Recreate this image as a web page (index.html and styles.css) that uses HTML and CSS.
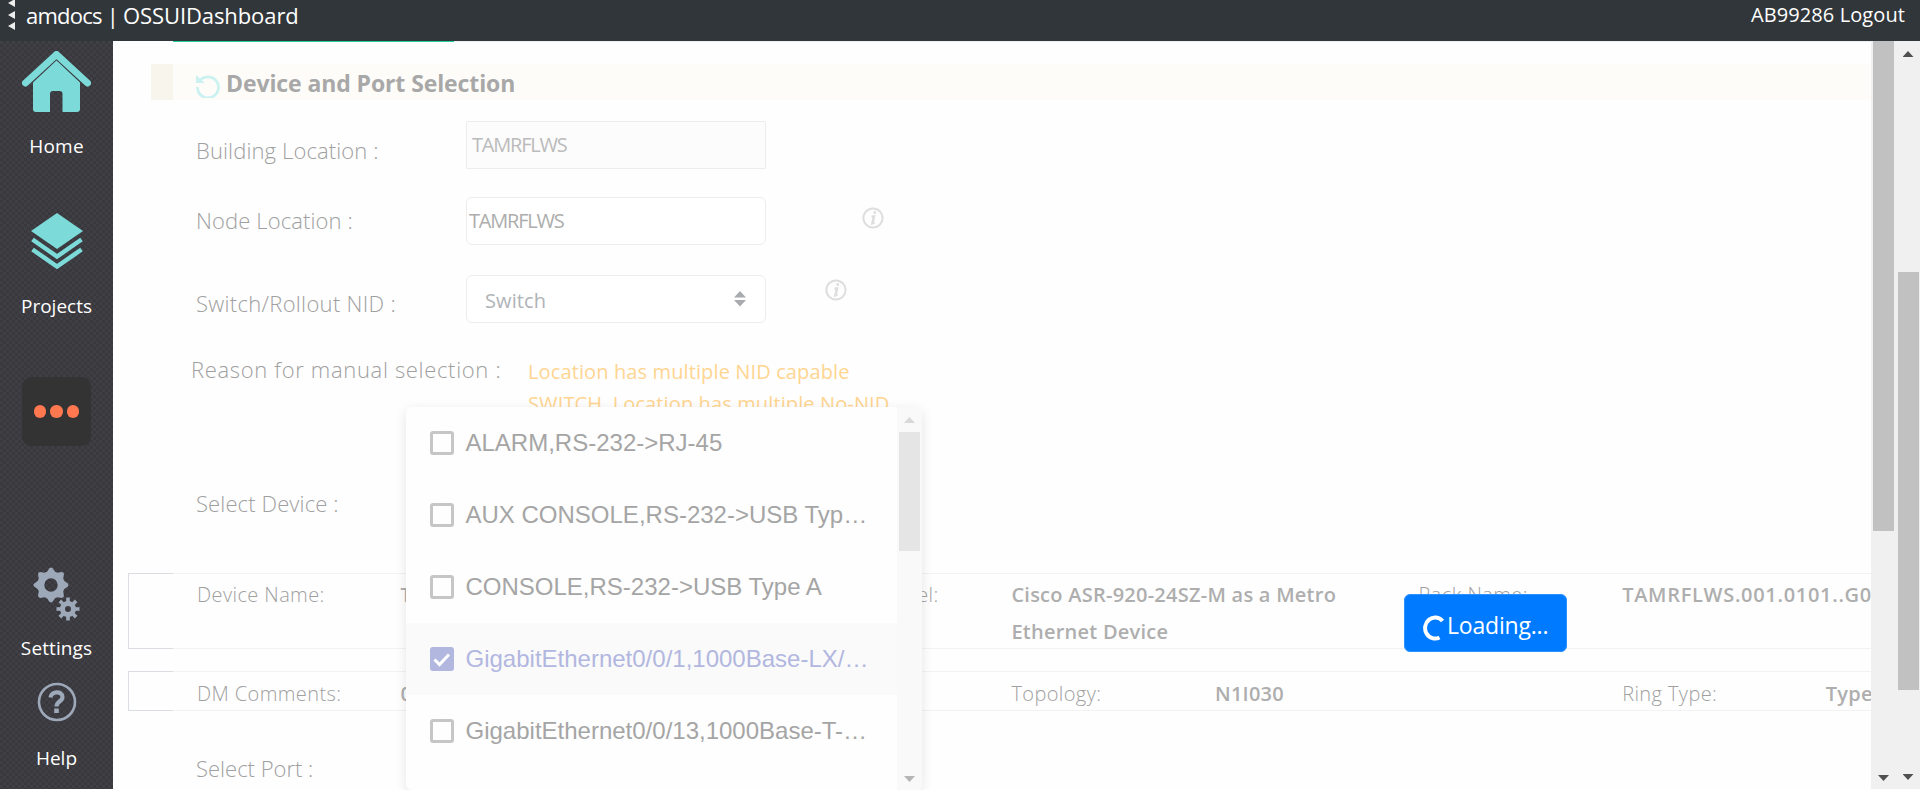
FILE: index.html
```html
<!DOCTYPE html>
<html lang="en">
<head>
<meta charset="utf-8">
<title>OSSUIDashboard</title>
<link rel="stylesheet" href="styles.css">
</head>
<body>
<header class="topbar">
  <div class="grip"><i></i><i></i><i></i></div>
  <div class="brand"><span class="org">amdocs | </span><span>OSSUIDashboard</span></div>
  <div class="user">AB99286 Logout</div>
</header>
<div class="shell">
  <nav class="sidebar">
    <svg class="ic-home" viewBox="0 0 69 61" width="69" height="61">
      <path d="M3.500 32 34.500 3.500 65.500 32" fill="none" stroke="#7cdbd9" stroke-width="7" stroke-linecap="round" stroke-linejoin="round"/>
      <path d="M34.500 9.500 58 31.500V58a3 3 0 0 1-3 3H40.500V43a3 3 0 0 0-3-3H31a3 3 0 0 0-3 3V61H14a3 3 0 0 1-3-3V31.500Z" fill="#7cdbd9"/>
    </svg>
    <span class="nav-label l-home">Home</span>
    <svg class="ic-layers" viewBox="0 0 52 56" width="52" height="56">
      <path d="M26 0 52 18 26 36 0 18Z" fill="#7cdbd9"/>
      <path d="M1.500 26.500 26 43.500 50.500 26.500M1.500 36.500 26 53.500 50.500 36.500" fill="none" stroke="#7cdbd9" stroke-width="4.500"/>
    </svg>
    <span class="nav-label l-projects">Projects</span>
    <div class="more"><i></i><i></i><i></i></div>
    <svg class="ic-gears" viewBox="0 0 48 54" width="48" height="54" fill="#9da8b9">
      <defs>
        <path id="tooth" d="M13 6 16.500 1.200Q18-.3 19.500 1.200L23 6Z"/>
        <rect id="cog" x="33.200" y="30.500" width="3.600" height="5"/>
      </defs>
      <circle cx="18" cy="18" r="10.200" fill="none" stroke="#9da8b9" stroke-width="7"/>
      <use href="#tooth"/><use href="#tooth" transform="rotate(45 18 18)"/><use href="#tooth" transform="rotate(90 18 18)"/><use href="#tooth" transform="rotate(135 18 18)"/><use href="#tooth" transform="rotate(180 18 18)"/><use href="#tooth" transform="rotate(225 18 18)"/><use href="#tooth" transform="rotate(270 18 18)"/><use href="#tooth" transform="rotate(315 18 18)"/>
      <circle cx="35" cy="42" r="5.500" fill="none" stroke="#9da8b9" stroke-width="5"/>
      <use href="#cog"/><use href="#cog" transform="rotate(45 35 42)"/><use href="#cog" transform="rotate(90 35 42)"/><use href="#cog" transform="rotate(135 35 42)"/><use href="#cog" transform="rotate(180 35 42)"/><use href="#cog" transform="rotate(225 35 42)"/><use href="#cog" transform="rotate(270 35 42)"/><use href="#cog" transform="rotate(315 35 42)"/>
    </svg>
    <span class="nav-label l-settings">Settings</span>
    <svg class="ic-help" viewBox="0 0 40 40" width="40" height="40">
      <circle cx="20" cy="20" r="18" fill="none" stroke="#9da8b9" stroke-width="2.600"/>
      <path d="M13.500 15.500C14 9 25.500 8.500 25.500 15 25.500 19.500 19.500 19.500 19.500 24.500" fill="none" stroke="#9da8b9" stroke-width="4.200"/>
      <rect x="17.200" y="26.500" width="4.600" height="4.500" fill="#9da8b9"/>
    </svg>
    <span class="nav-label l-help">Help</span>
  </nav>
  <main class="content">
    <div class="tabline"><i></i></div>
    <div class="band">
      <svg class="ic-reset" viewBox="0 0 24 24" width="24" height="24">
        <path d="M4 6.500A10.500 10.500 0 1 1 1.500 13" fill="none" stroke="#cbf2f1" stroke-width="2.800"/>
        <path d="M0 1V9H9Z" fill="#cbf2f1"/>
      </svg>
      <h2>Device and Port Selection</h2>
    </div>
    <div class="row r-building">
      <label class="lab">Building Location :</label>
      <div class="field disabled">TAMRFLWS</div>
    </div>
    <div class="row r-node">
      <label class="lab">Node Location :</label>
      <div class="field">TAMRFLWS</div>
      <svg class="info info-a" viewBox="0 0 22 22" width="22" height="22"><circle cx="11" cy="11" r="9.600"/><path d="M9.500 9.500h2.500l-1.500 6.500 2-.8" stroke-width="2.600"/><path d="M11.500 5.500h2.500" stroke-width="2.600"/></svg>
    </div>
    <div class="row r-switch">
      <label class="lab wide">Switch/Rollout NID :</label>
      <div class="field select"><span>Switch</span>
        <svg viewBox="0 0 12 16" width="12" height="16"><path d="M6 0 12 6.500H0ZM0 9H12L6 15.500Z" fill="#a9abae"/></svg>
      </div>
      <svg class="info info-b" viewBox="0 0 22 22" width="22" height="22"><circle cx="11" cy="11" r="9.600"/><path d="M9.500 9.500h2.500l-1.500 6.500 2-.8" stroke-width="2.600"/><path d="M11.500 5.500h2.500" stroke-width="2.600"/></svg>
    </div>
    <div class="row r-reason">
      <label class="lab reason">Reason for manual selection :</label>
      <div class="warn">Location has multiple NID capable<br>SWITCH, Location has multiple No-NID</div>
    </div>
    <div class="row r-device"><label class="lab">Select Device :</label></div>
    <div class="box box-a">
      <div class="cap"></div>
      <div class="cells">
        <span class="k">Device Name:</span><b class="two">T</b><span class="k">Device Model:</span>
        <b class="two">Cisco ASR-920-24SZ-M as a Metro<br>Ethernet Device</b><span class="k">Rack Name:</span><b class="two tam">TAMRFLWS.001.0101..G03</b>
      </div>
    </div>
    <div class="box box-b">
      <div class="cap"></div>
      <div class="cells">
        <span class="k">DM Comments:</span><b class="three">0</b>
        <span class="k">Topology:</span><b class="two">N1I030</b><span class="k">Ring Type:</span><b>Type</b>
      </div>
    </div>
    <div class="row r-port"><label class="lab">Select Port :</label></div>
  </main>
  <div class="bar inner"><div class="thumb"></div><i class="down"></i></div>
  <div class="bar outer"><i class="up"></i><div class="thumb"></div><i class="down"></i></div>
  <div class="drop-clip">
    <div class="drop">
      <ul>
        <li><i class="cb"></i><span>ALARM,RS-232-&gt;RJ-45</span></li>
        <li><i class="cb"></i><span>AUX CONSOLE,RS-232-&gt;USB Typ…</span></li>
        <li><i class="cb"></i><span>CONSOLE,RS-232-&gt;USB Type A</span></li>
        <li class="on"><i class="cb"><svg viewBox="0 0 24 24" width="24" height="24"><path d="M4.500 12.500 9.500 17.500 19 7.500" fill="none" stroke="#fff" stroke-width="3"/></svg></i><span>GigabitEthernet0/0/1,1000Base-LX/…</span></li>
        <li><i class="cb"></i><span>GigabitEthernet0/0/13,1000Base-T-…</span></li>
      </ul>
      <div class="dbar"><i class="up"></i><div class="thumb"></div><i class="down"></i></div>
    </div>
  </div>
  <div class="loading">
    <svg viewBox="0 0 24 26" width="24" height="26"><path d="M20.500 6A10 10.500 0 1 0 17.500 22.500" fill="none" stroke="#fff" stroke-width="4"/></svg>
    <span>Loading...</span>
  </div>
</div>
</body>
</html>
```
FILE: styles.css
```css
* { box-sizing: border-box; }
body { margin: 0; height: 798px; overflow: hidden; background: #fff; font-family: "Open Sans", "Noto Sans", sans-serif; }
h2, ul { margin: 0; padding: 0; }
.topbar { display: flex; height: 41px; background: #31363a; color: #fff; line-height: 31px; }
.grip { width: 15px; padding-left: 8px; display: flex; flex-direction: column; }
.grip i { flex: none; border: 4px solid transparent; border-width: 4px 7px 4px 0; border-right-color: #eee; margin-bottom: 3.500px; width: 7px; height: 8px; }
.grip i:first-child { margin-top: -1px; }
.brand { margin-left: 11px; font-size: 22px; letter-spacing: -0.1px; flex: 1; white-space: pre; }
.org { letter-spacing: -0.75px; }
.user { font-size: 20px; letter-spacing: 0.1px; padding-right: 15px; line-height: 30px; }
.shell { position: relative; display: flex; height: 748px; }

.sidebar { width: 113px; display: flex; flex-direction: column; align-items: center; color: #fff; 
  background: repeating-conic-gradient(#39383d 0 25%, #403f45 0 50%) 0 0 / 6px 6px; }
.nav-label { font-size: 19px; line-height: 26px; }
.ic-home { margin-top: 10px; }
.l-home { margin-top: 21px; letter-spacing: .2px; }
.ic-layers { margin-top: 54px; }
.l-projects { margin-top: 24px; }
.more { margin-top: 58px; width: 69px; height: 69px; border-radius: 9px; background: #333; display: flex; gap: 4px; align-items: center; justify-content: center; }
.more i { width: 12.5px; height: 12.5px; border-radius: 50%; background: #ff7850; }
.ic-gears { margin-top: 121px; }
.l-settings { margin-top: 14px; letter-spacing: .1px; }
.ic-help { margin-top: 21px; }
.l-help { margin-top: 23px; }

.content { flex: 1; min-width: 0; overflow: hidden; background: #fefefe; }
.tabline { height: 23px; padding-left: 60px; background: linear-gradient(#eee, #eee) 60px 0 / 100% 1px no-repeat; }
.tabline i { display: block; width: 281px; height: 1px; background: #20d096; }
.band { display: flex; height: 36px; margin-left: 38px; background: linear-gradient(90deg, #f8f5ed 22px, #fdfcf8 22px); }
.ic-reset { margin: 10px 6px 0 45px; }
h2 { font-size: 23px; line-height: 39px; color: #a8a8a8; font-weight: 700; letter-spacing: -0.1px; }
.row { display: flex; align-items: flex-start; padding-left: 83px; }
.lab { width: 270px; flex: none; font-size: 22px; line-height: 30px; color: #a0a0a0; white-space: nowrap; font-weight: 300; letter-spacing: .12px; }
.wide { letter-spacing: .3px; }
.field { width: 300px; height: 48px; flex: none; border: 1px solid #ededee; border-radius: 6px; background: #fff; color: #adadad; font-size: 20px; line-height: 46px; padding-left: 2px; letter-spacing: -1.2px; }
.disabled { background: #fcfcfc; border-radius: 2px; color: #bbb; padding-left: 5px; }
.r-building { height: 97px; padding-top: 21px; }
.r-building .lab { margin-top: 14px; }
.r-node { height: 78px; }
.r-node .lab { margin-top: 8px; }
.r-switch { height: 83px; }
.r-switch .lab { margin-top: 13px; }
.select { display: flex; justify-content: space-between; align-items: center; padding: 0 19px 0 18px; letter-spacing: .1px; color: #b0b3b7; line-height: 46px; }
.select span { padding-top: 4px; }
.info { fill: none; stroke: #dedede; stroke-width: 2; }
.info-a { margin: 10px 0 0 96px; }
.info-b { margin: 4px 0 0 59px; }
.r-reason { height: 131px; }
.reason { margin-left: -5px; margin-top: -4px; letter-spacing: .67px; width: 337px; }
.warn { color: #ffd591; font-size: 20px; line-height: 32px; margin-top: -2px; white-space: nowrap; letter-spacing: .12px; }
.r-device { height: 84px; padding-top: 0; }
.r-device .lab { margin-top: -1px; }
.box { display: flex; margin-left: 15px; }
.box-a { height: 76px; }
.box-b { height: 40px; margin-top: 22px; }
.cap { width: 45px; border: 1px solid #dadde2; border-right: 0; flex: none; }
.cells { display: grid; grid-template-columns: repeat(9, 203.600px); flex: 1; min-width: 0; overflow: hidden; padding: 2px 0 0 24px; border: solid #f2f2f3; border-width: 1px 0; color: #aeaeae; font-size: 20px; line-height: 37px; white-space: nowrap; }
.box-b .cells { padding-top: 3px; }
.cells b { font-weight: 600; letter-spacing: .25px; }
.cells .tam { letter-spacing: .7px; }
.two { grid-column: span 2; }
.three { grid-column: span 3; }
.k { font-weight: 300; letter-spacing: .4px; color: #a0a0a0; }
.r-port { padding-top: 42px; }
.r-port .lab { letter-spacing: 0; }

.bar { width: 23px; background: #f0f0f0; display: flex; flex-direction: column; align-items: center; }
.outer { width: 26px; }
.bar .thumb { width: 21px; background: #c1c1c1; margin-left: 1px; }
.inner .thumb { height: 490px; }
.outer .thumb { height: 418px; margin: 215px 0 0 3px; }
.up, .down { display: block; width: 11px; height: 6px; background: #505050; }
.bar .up, .bar .down { margin-left: 2px; }
.up { clip-path: polygon(50% 0, 100% 100%, 0 100%); }
.down { clip-path: polygon(0 0, 100% 0, 50% 100%); margin-top: auto; margin-bottom: 8px; }
.outer .up { margin-top: 10px; }
.outer .down { margin-bottom: 9px; }

.drop-clip { position: absolute; left: 390px; top: 350px; width: 548px; height: 399px; overflow: hidden; }
.drop { margin: 16px 0 0 16px; width: 516px; height: 383px; background: #fefefe; border-radius: 6px; box-shadow: 0 3px 12px rgba(0,0,0,.1); display: flex; overflow: hidden; }
.drop ul { list-style: none; flex: 1; }
.drop li { height: 72px; display: flex; align-items: center; padding-left: 24px; gap: 11.500px; font: 24px/72px "Liberation Sans", Arial, sans-serif; color: #a5a5a5; white-space: nowrap; }
.drop li.on { background: #fafafa; color: #b2b7e0; }
.cb { width: 24px; height: 24px; flex: none; border: 3px solid #c6c6c6; border-radius: 3px; }
.on .cb { border: 0; background: #b2b7e0; display: flex; }
.dbar { width: 25px; background: #f9f9f9; display: flex; flex-direction: column; align-items: center; }
.dbar .up { margin-top: 10px; background: #d8d8d8; }
.dbar .thumb { width: 21px; height: 119px; margin-top: 9px; background: #e5e5e5; }
.dbar .down { background: #b5b5b5; }

.loading { position: absolute; left: 1404px; top: 553px; width: 163px; height: 58px; border-radius: 6px; background: #007bff; border: 1px solid #2d91ff; color: #fff; display: flex; padding: 20px 0 0 17px; font-size: 23px; line-height: 24px; }
.loading svg { flex: none; }
.loading span { letter-spacing: -0.2px; margin: -2px 0 0 1px; }
```
